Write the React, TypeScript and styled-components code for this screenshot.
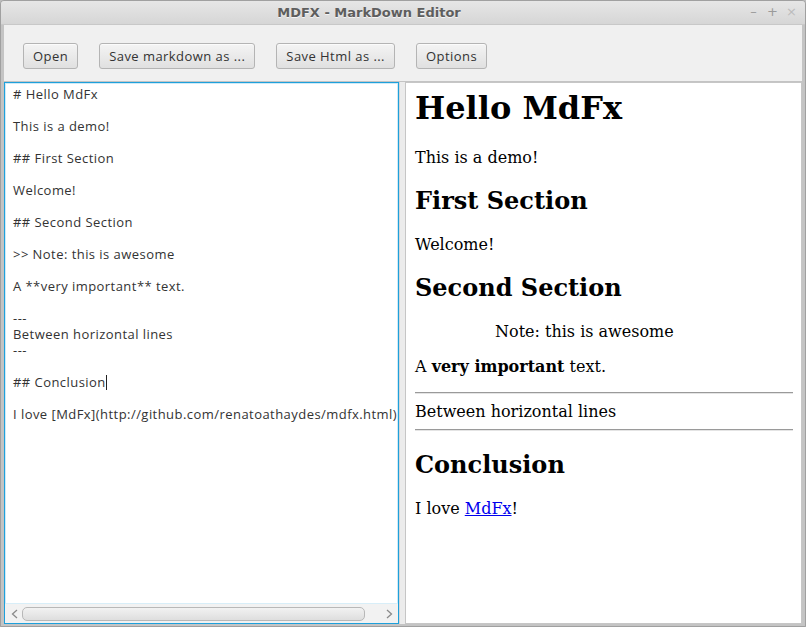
import React from 'react';
import styled, { createGlobalStyle } from 'styled-components';

const GlobalStyle = createGlobalStyle`
  html, body {
    margin: 0;
    padding: 0;
    background: #bdbdbd;
  }
  #root {
    width: 806px;
    height: 627px;
  }
`;

const Frame = styled.div`
  width: 806px;
  height: 627px;
  box-sizing: border-box;
  display: flex;
  flex-direction: column;
  background: #c4c4c4;
  border: 1px solid #a0a0a0;
  border-radius: 4px 4px 0 0;
  overflow: hidden;
`;

const TitleBar = styled.div`
  height: 23px;
  flex: none;
  display: flex;
  align-items: center;
  justify-content: center;
  padding-right: 68px;
  position: relative;
  background: linear-gradient(#e6e6e6, #d6d6d6);
  border-bottom: 1px solid #c8c8c8;
`;

const Title = styled.div`
  font-family: 'DejaVu Sans', sans-serif;
  font-weight: bold;
  font-size: 13px;
  color: #5e5e5e;
  text-shadow: 0 1px 0 #f4f4f4;
`;

const WindowControls = styled.div`
  position: absolute;
  right: 8px;
  top: 3px;
  display: flex;
  gap: 8px;
  font-family: 'DejaVu Sans', sans-serif;
  font-size: 13px;
`;

const Control = styled.span<{ $faint?: boolean }>`
  width: 11px;
  text-align: center;
  color: ${({ $faint }) => ($faint ? '#bcbcbc' : '#9a9a9a')};
`;

const Body = styled.div`
  flex: 1;
  display: flex;
  flex-direction: column;
  margin: 0 3px 2px 3px;
  background: #f0f0f0;
`;

const Toolbar = styled.div`
  height: 56px;
  flex: none;
  display: flex;
  align-items: center;
  gap: 21px;
  padding: 6px 0 0 19px;
  box-sizing: border-box;
`;

const Button = styled.button`
  height: 26px;
  padding: 0 9px;
  font-family: 'Open Sans', sans-serif;
  font-size: 13px;
  letter-spacing: 0.45px;
  color: #333;
  background: linear-gradient(#f4f4f4, #e0e0e0);
  border: 1px solid #b4b4b4;
  border-radius: 3px;
  box-shadow: inset 0 1px 0 #fbfbfb;
`;

const Split = styled.div`
  flex: 1;
  display: flex;
  min-height: 0;
  border-top: 1px solid #c4c4c4;
`;

const EditorPane = styled.div`
  width: 395px;
  flex: none;
  display: flex;
  flex-direction: column;
  box-sizing: border-box;
  border: 1px solid #1ea0db;
  box-shadow: inset 0 0 0 1px #cfeaf7;
  background: #fff;
`;

const EditorText = styled.div`
  flex: 1;
  padding: 3px 0 0 8px;
  font-family: 'Open Sans', sans-serif;
  font-size: 13px;
  letter-spacing: 0.45px;
  line-height: 16px;
  color: #333;
  white-space: pre;
  overflow: hidden;
`;

const Caret = styled.span`
  display: inline-block;
  width: 1px;
  height: 15px;
  background: #222;
  vertical-align: -3px;
`;

const HScroll = styled.div`
  height: 19px;
  flex: none;
  display: flex;
  align-items: center;
  gap: 2px;
  padding: 0 3px;
  background: #f2f2f2;
  border-top: 1px solid #d8eef8;
`;

const Arrow = styled.span`
  width: 12px;
  display: flex;
  justify-content: center;
`;

const Thumb = styled.div`
  flex: 1;
  height: 12px;
  margin-right: 16px;
  border: 1px solid #b8b8b8;
  border-radius: 5px;
  background: linear-gradient(#f2f2f2, #dedede);
`;

const Divider = styled.div`
  width: 6px;
  flex: none;
  background: #ececec;
  border-left: 1px solid #d6d6d6;
  box-sizing: border-box;
`;

const Preview = styled.div`
  flex: 1;
  background: #fff;
  border: 1px solid #c6c6c6;
  padding: 7px 8px 0 9px;
  font-family: 'DejaVu Serif', serif;
  font-size: 16px;
  color: #000;
  overflow: hidden;

  h1 {
    font-size: 32px;
    margin: 0 0 21px 0;
    line-height: 37px;
  }

  h2 {
    font-size: 24px;
    margin: 20px 0;
    line-height: 28px;
  }

  p {
    margin: 16px 0;
    line-height: 19px;
  }

  blockquote {
    margin: 16px 40px;
    line-height: 19px;
  }

  blockquote blockquote {
    margin: 0 40px;
  }

  hr {
    margin: 8px 0;
    border: none;
    border-top: 1px solid #9a9a9a;
    border-bottom: 1px solid #e4e4e4;
    height: 0;
  }

  a {
    color: #0000ee;
  }
`;

const Plain = styled.div`
  line-height: 19px;
`;

const editorLines = [
  '# Hello MdFx',
  '',
  'This is a demo!',
  '',
  '## First Section',
  '',
  'Welcome!',
  '',
  '## Second Section',
  '',
  '>> Note: this is awesome',
  '',
  'A **very important** text.',
  '',
  '---',
  'Between horizontal lines',
  '---',
  '',
];

function App () {
  return (
    <>
      <GlobalStyle />
      <Frame>
        <TitleBar>
          <Title>MDFX - MarkDown Editor</Title>
          <WindowControls>
            <Control>–</Control>
            <Control>+</Control>
            <Control $faint>×</Control>
          </WindowControls>
        </TitleBar>
        <Body>
          <Toolbar>
            <Button>Open</Button>
            <Button>Save markdown as ...</Button>
            <Button>Save Html as ...</Button>
            <Button>Options</Button>
          </Toolbar>
          <Split>
            <EditorPane>
              <EditorText>
                {editorLines.join('\n')}
                {'\n## Conclusion'}<Caret />
                {'\n\nI love [MdFx](http://github.com/renatoathaydes/mdfx.html)'}
              </EditorText>
              <HScroll>
                <Arrow>
                  <svg width='7' height='10' viewBox='0 0 7 10'>
                    <path d='M6 1 L1.5 5 L6 9' fill='none' stroke='#8a8a8a' strokeWidth='1.3' />
                  </svg>
                </Arrow>
                <Thumb />
                <Arrow>
                  <svg width='7' height='10' viewBox='0 0 7 10'>
                    <path d='M1 1 L5.5 5 L1 9' fill='none' stroke='#8a8a8a' strokeWidth='1.3' />
                  </svg>
                </Arrow>
              </HScroll>
            </EditorPane>
            <Divider />
            <Preview>
              <h1>Hello MdFx</h1>
              <p>This is a demo!</p>
              <h2>First Section</h2>
              <p>Welcome!</p>
              <h2>Second Section</h2>
              <blockquote>
                <blockquote>Note: this is awesome</blockquote>
              </blockquote>
              <p>A <b>very important</b> text.</p>
              <hr />
              <Plain>Between horizontal lines</Plain>
              <hr />
              <h2>Conclusion</h2>
              <p>I love <a href='#'>MdFx</a>!</p>
            </Preview>
          </Split>
        </Body>
      </Frame>
    </>
  );
}

export default App;
